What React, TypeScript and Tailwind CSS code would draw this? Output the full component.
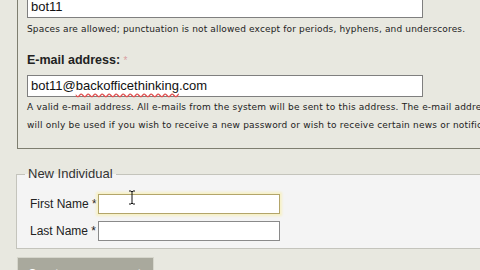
import React from 'react';

const verdana = { fontFamily: '"DejaVu Sans", Verdana, sans-serif' };

function Field({ label, focused }: { label: string; focused?: boolean }) {
  return (
    <div className="flex items-center h-[19px]">
      <span className="w-[68px] text-[12px] text-[#222]">{label}</span>
      <div
        className={`w-[182px] h-[20px] bg-white border ${
          focused
            ? 'border-[#b3a56a] shadow-[0_0_2px_2px_#f6f0c8]'
            : 'border-[#8a8a8a]'
        }`}
      />
    </div>
  );
}

export default function App() {
  return (
    <div
      className="w-[480px] h-[270px] overflow-hidden bg-[#e8e8e0] relative"
      style={{ fontFamily: '"Liberation Sans", Arial, sans-serif' }}
    >
      {/* account fieldset (scrolled, top cut off) */}
      <div className="ml-[17px] h-[153px] border-l border-b border-[#7e7e70] pl-[9px]">
        <div className="-mt-[4px] w-[396px] h-[22px] bg-white border border-[#7f7f7f] px-[3px] flex items-center text-[13px] text-[#111]">
          bot11
        </div>
        <p className="mt-[5px] text-[9px] leading-[12px] text-[#222] tracking-[0.15px] whitespace-nowrap" style={verdana}>
          Spaces are allowed; punctuation is not allowed except for periods, hyphens, and underscores.
        </p>
        <label className="block mt-[18px] text-[12.5px] leading-[15px] font-bold text-[#222]">
          E-mail address: <span className="text-[#d9a0a0] font-normal text-[10px] align-top">*</span>
        </label>
        <div className="mt-[7px] w-[396px] h-[22px] bg-white border border-[#7f7f7f] px-[3px] flex items-center text-[13px] text-[#111]">
          bot11@
          <span className="underline decoration-wavy decoration-[#e05050] underline-offset-2">backofficethinking</span>
          .com
        </div>
        <div className="mt-[1px] text-[9px] leading-[18px] text-[#222] tracking-[0.2px] whitespace-nowrap" style={verdana}>
          <p>A valid e-mail address. All e-mails from the system will be sent to this address. The e-mail address is not made public and</p>
          <p>will only be used if you wish to receive a new password or wish to receive certain news or notifications by e-mail.</p>
        </div>
      </div>

      {/* New Individual fieldset */}
      <fieldset className="mt-[17px] ml-[16px] w-[480px] h-[83px] bg-[#f4f4f4] border-t border-b border-l border-[#c4c4bc] pl-[13px]">
        <legend className="ml-[-5px] px-[3px] text-[13px] leading-[16px] text-[#333]">New Individual</legend>
        <div className="mt-[12px] flex flex-col gap-[8px]">
          <Field label="First Name *" focused />
          <Field label="Last Name *" />
        </div>
      </fieldset>

      <div className="mt-[8px] ml-[17px] w-[137px] h-[20px] bg-[#a9a99d] border border-[#d6d6cc] px-[10px] pt-[7px] text-[12px] font-bold text-white">
        Create new account
      </div>

      {/* text cursor */}
      <svg className="absolute left-[128px] top-[190px]" width="8" height="15" viewBox="0 0 8 15">
        <path d="M1 1h2l1 1 1-1h2M4 2v11M1 14h2l1-1 1 1h2" stroke="#111" strokeWidth="1" fill="none" />
      </svg>
    </div>
  );
}
